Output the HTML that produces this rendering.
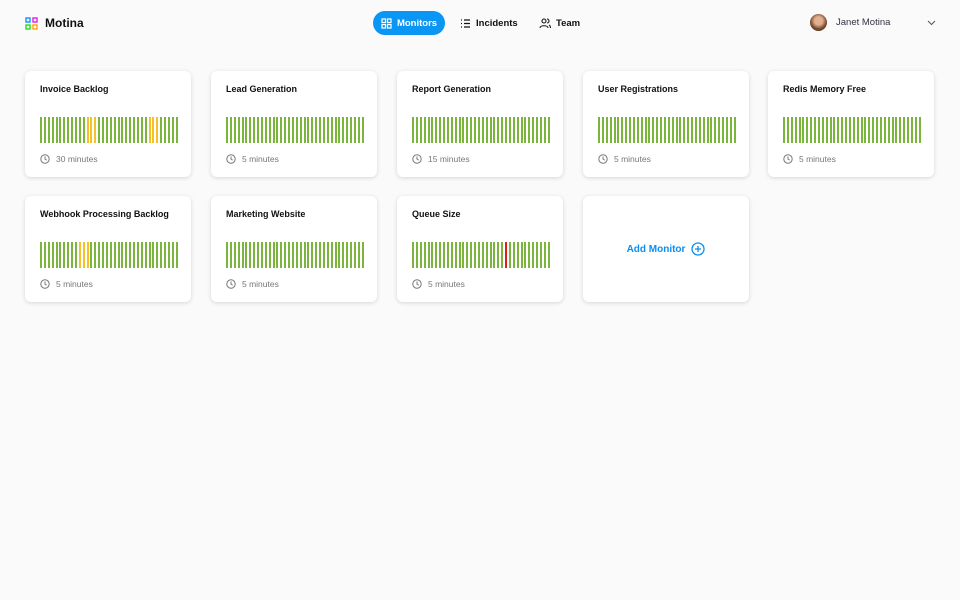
<!DOCTYPE html><html><head><style>
body{margin:0;width:960px;height:600px;background:#fafafa;font-family:"Liberation Sans",sans-serif;position:relative;overflow:hidden}
.logo{position:absolute;left:25px;top:16px;display:flex;align-items:center;gap:7px;font-weight:bold;font-size:12px;color:#111}
.nav div{position:absolute;top:11px;display:flex;align-items:center;gap:5px;height:24px;font-size:9.5px;font-weight:bold;color:#111}
.nav .act{background:#0a96f5;color:#fff;left:373px;width:72px;justify-content:center;border-radius:12px}
.user{position:absolute;left:810px;top:14px;display:flex;align-items:center;font-size:9.5px;color:#334}
.av{width:17px;height:17px;border-radius:50%;background:radial-gradient(circle at 50% 40%,#e0b090 30%,#7a4a2a 60%,#333 100%);margin-right:9px}
.card{position:absolute;width:166px;height:106px;background:#fff;border-radius:6px;box-shadow:0 1px 4px rgba(0,0,0,.15)}
.t{position:absolute;left:15px;top:13px;font-size:9px;font-weight:bold;color:#111}
.bars{position:absolute;left:15px;top:46px;width:138px;height:26px;display:flex;justify-content:space-between}
.bars i{width:2px;background:#7cb53e;display:block}
.bars i.y{background:#f5c02a}.bars i.r{background:#e3191b}
.f{position:absolute;left:15px;top:83px;font-size:8.5px;color:#777;display:flex;align-items:center;gap:6px}
</style></head><body>
<div class="logo"><svg width="13" height="13" viewBox="0 0 13 13" fill="none" stroke-width="1.4"><rect x="1" y="1" width="4" height="4" stroke="#1a8cff"/><rect x="8" y="1" width="4" height="4" stroke="#e020e0"/><rect x="1" y="8" width="4" height="4" stroke="#20e020"/><rect x="8" y="8" width="4" height="4" stroke="#ffa500"/></svg>Motina</div>
<div class="nav"><div class="act"><svg width="11" height="11" viewBox="0 0 11 11" fill="none" stroke="#fff" stroke-width="1.2"><rect x="1" y="1" width="3.5" height="3.5"/><rect x="6.5" y="1" width="3.5" height="3.5"/><rect x="1" y="6.5" width="3.5" height="3.5"/><rect x="6.5" y="6.5" width="3.5" height="3.5"/></svg>Monitors</div>
<div style="left:460px"><svg width="11" height="11" viewBox="0 0 11 11" stroke="#111" stroke-width="1.2"><path d="M1 2h1M1 5.5h1M1 9h1M4 2h6M4 5.5h6M4 9h6"/></svg>Incidents</div>
<div style="left:539px"><svg width="12" height="11" viewBox="0 0 12 11" fill="none" stroke="#111" stroke-width="1.1"><circle cx="5" cy="3" r="2"/><path d="M1 10c0-3 8-3 8 0M8 1a2 2 0 010 4M10 7c1 .5 1.5 1.5 1.5 3"/></svg>Team</div></div>
<div class="user"><div class="av"></div>Janet Motina</div>
<svg style="position:absolute;left:927px;top:20px" width="9" height="6" viewBox="0 0 9 6" fill="none" stroke="#555" stroke-width="1"><path d="M1 1l3.5 3.5L8 1"/></svg>
<div id="c"></div>
<script>
var d=[["Invoice Backlog","30 minutes",25,71,{12:"y",13:"y",14:"y",28:"y",29:"y",30:"y"}],["Lead Generation","5 minutes",211,71,{}],["Report Generation","15 minutes",397,71,{}],["User Registrations","5 minutes",583,71,{}],["Redis Memory Free","5 minutes",768,71,{}],["Webhook Processing Backlog","5 minutes",25,196,{10:"y",11:"y",12:"y"}],["Marketing Website","5 minutes",211,196,{}],["Queue Size","5 minutes",397,196,{24:"r"}]];
var clk='<svg width="10" height="10" viewBox="0 0 10 10" fill="none" stroke="#777" stroke-width="1"><circle cx="5" cy="5" r="4.2"/><path d="M5 2.5V5l1.6 1.2"/></svg>';
var h="";d.forEach(function(c){var b="";for(var i=0;i<36;i++)b+='<i class="'+(c[4][i]||"")+'"></i>';h+='<div class="card" style="left:'+c[2]+'px;top:'+c[3]+'px"><div class="t">'+c[0]+'</div><div class="bars">'+b+'</div><div class="f">'+clk+c[1]+'</div></div>'});
h+='<div class="card" style="left:583px;top:196px;display:flex;align-items:center;justify-content:center;gap:6px;color:#0a8ef0;font-weight:bold;font-size:10px">Add Monitor<svg width="14" height="14" viewBox="0 0 14 14" fill="none" stroke="#0a8ef0" stroke-width="1.3"><circle cx="7" cy="7" r="6"/><path d="M7 4v6M4 7h6"/></svg></div>';
document.getElementById("c").innerHTML=h;
</script>
</body></html>
